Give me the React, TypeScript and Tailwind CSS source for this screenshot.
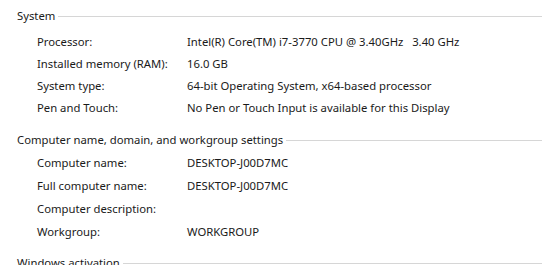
const systemRows = [
  ["Processor:", "Intel(R) Core(TM) i7-3770 CPU @ 3.40GHz   3.40 GHz"],
  ["Installed memory (RAM):", "16.0 GB"],
  ["System type:", "64-bit Operating System, x64-based processor"],
  ["Pen and Touch:", "No Pen or Touch Input is available for this Display"],
];

const nameRows = [
  ["Computer name:", "DESKTOP-J00D7MC"],
  ["Full computer name:", "DESKTOP-J00D7MC"],
  ["Computer description:", ""],
  ["Workgroup:", "WORKGROUP"],
];

const Header = ({ title }: { title: string }) => (
  <div className="flex items-center h-5 pl-[17px]">
    <span>{title}</span>
    <div className="flex-1 h-px bg-[#d6d6d6] ml-[3px] mt-[1px]" />
  </div>
);

const Row = ({ label, value, tall }: { label: string; value: string; tall?: boolean }) => (
  <div className={`flex items-center pl-[37px] ${tall ? "h-[23px]" : "h-[22px]"}`}>
    <span className="w-[150px] shrink-0">{label}</span>
    <span className="whitespace-pre">{value}</span>
  </div>
);

export default function App() {
  return (
    <div
      className="w-[542px] h-[265px] overflow-hidden bg-white text-[#1a1a1a] text-[11.3px] leading-5 pt-[6px]"
      style={{ fontFamily: '"Noto Sans", "Open Sans", sans-serif' }}
    >
      <Header title="System" />
      <div className="mt-[5px]">
        {systemRows.map(([l, v]) => (
          <Row key={l} label={l} value={v} />
        ))}
      </div>
      <div className="mt-[11px]">
        <Header title="Computer name, domain, and workgroup settings" />
      </div>
      <div className="mt-[1px]">
        {nameRows.map(([l, v]) => (
          <Row key={l} label={l} value={v} tall />
        ))}
      </div>
      <div className="mt-[10px]">
        <Header title="Windows activation" />
      </div>
    </div>
  );
}
